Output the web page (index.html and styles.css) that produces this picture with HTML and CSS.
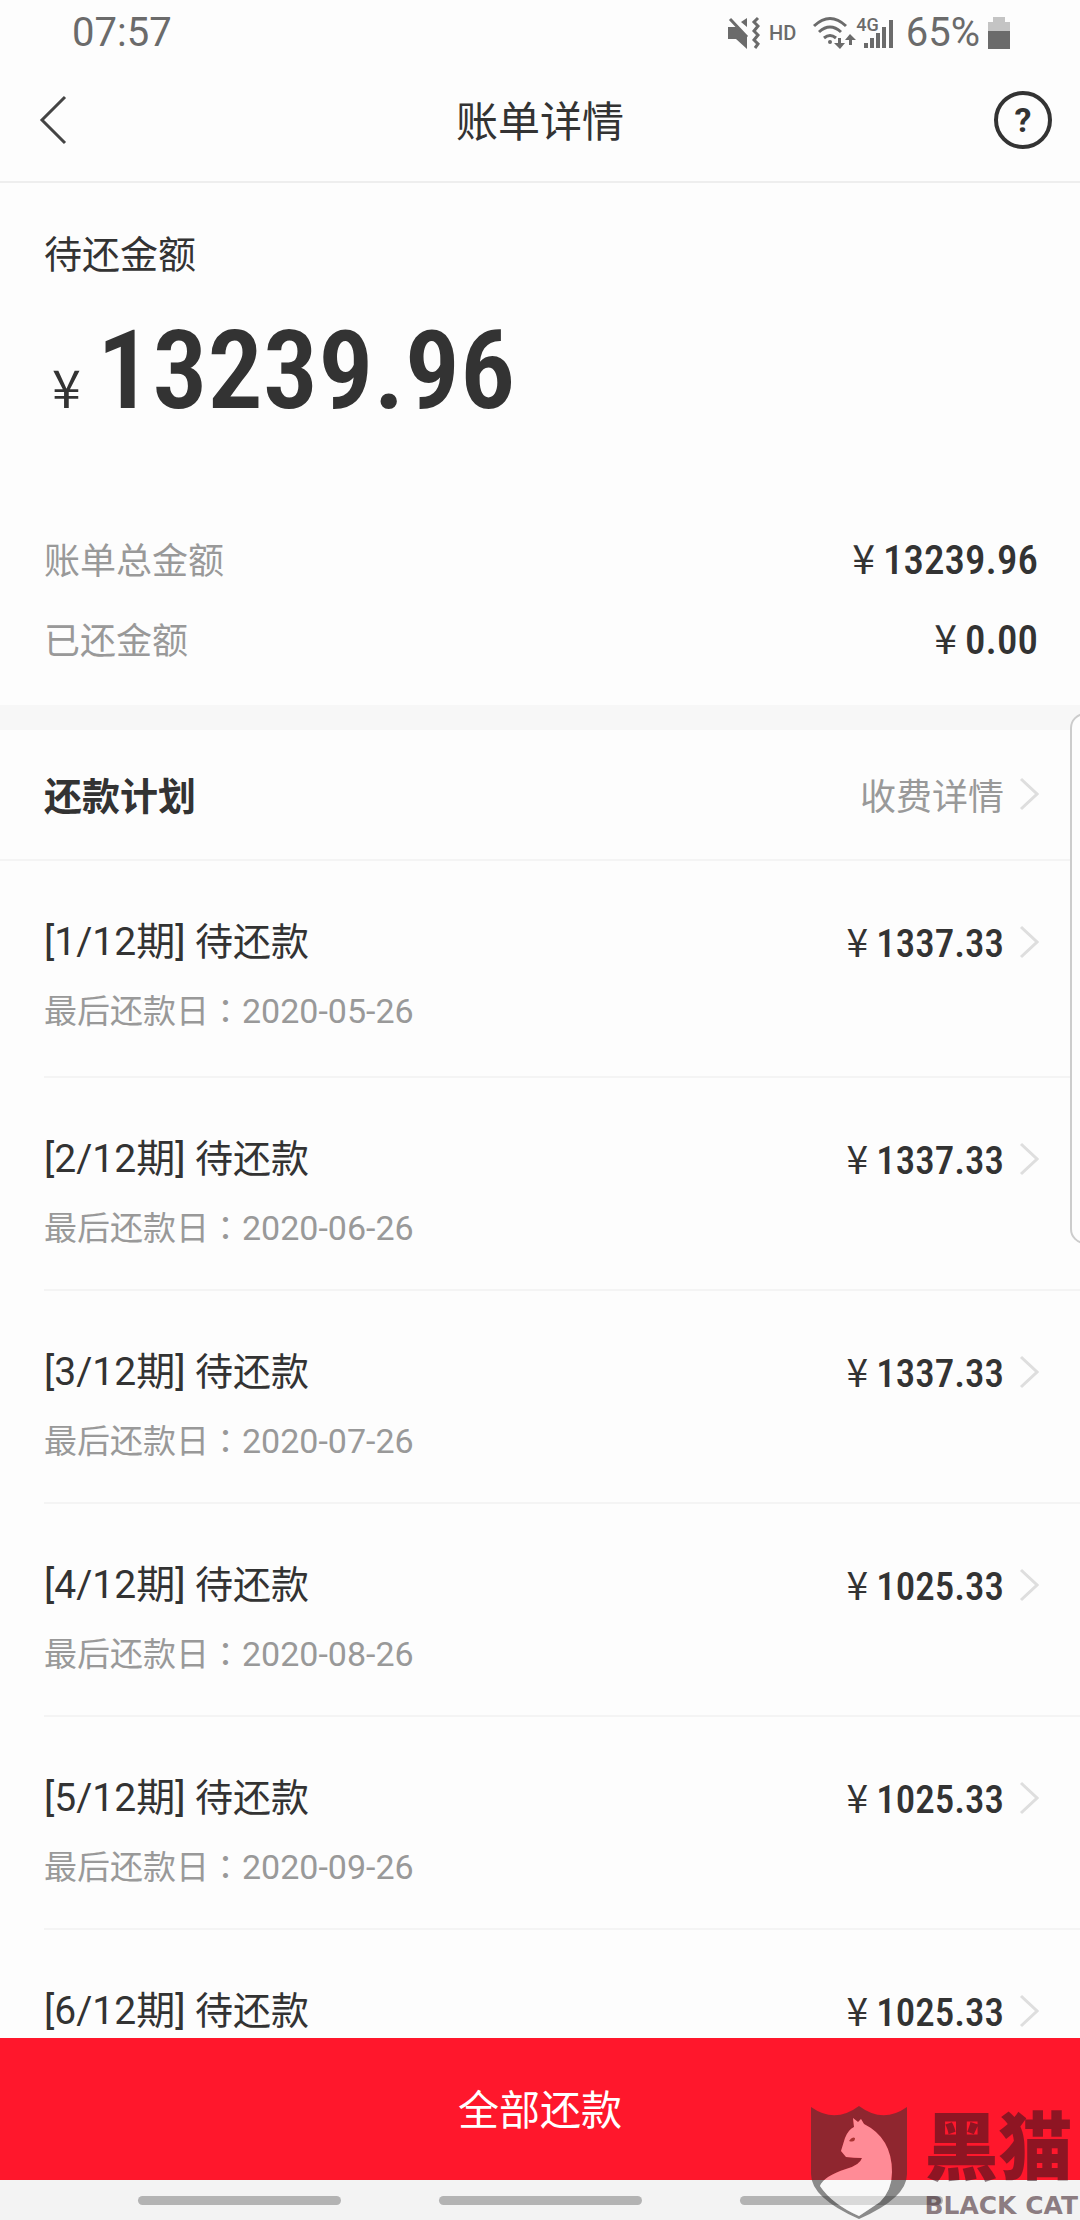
FILE: index.html
```html
<!DOCTYPE html>
<html lang="zh-CN">
<head>
<meta charset="utf-8">
<title>账单详情</title>
<link rel="stylesheet" href="styles.css">
</head>
<body>
<div class="app">
  <div class="status">
    <span class="clock">07:57</span>
    <div class="status-icons">
      <svg class="mute" width="34" height="34" viewBox="0 0 34 34"><path d="M1 11h8l11 9v13L9 23H1zM20 2v9l-6-5z"/><path class="line" d="M3 3l17 18"/><path class="line" d="M31 2l-4 4l4 4l-4 5l4 4l-4 5l4 4l-3 4"/></svg>
      <span class="hd">HD</span>
      <svg class="wifi" width="44" height="36" viewBox="0 0 44 36"><path class="line" d="M2 11q16-15 32 0M7 17q11-10 22 0M12 23q6-5 12 0"/><circle cx="18" cy="27" r="2"/><path d="M26 23h3v5h4l-5 6l-6-6h4zM37 30h3v-5h4l-6-6l-5 6h4z"/></svg>
      <span class="signal"><span class="gen">4G</span><svg width="30" height="30" viewBox="0 0 30 30"><path d="M1 25h4v5H1zM7 20h4v10H7zM13 15h4v15h-4zM19 9h4v21h-4zM26 2h4v28h-4z"/></svg></span>
      <span class="percent">65%</span>
      <svg class="battery" width="22" height="34" viewBox="0 0 22 34"><path class="pale" d="M5 1h12v5h5v9H0V6h5z"/><path d="M0 15h22v18H0z"/></svg>
    </div>
  </div>

  <header class="bar">
    <button class="icon-button" aria-label="返回"><svg width="28" height="50" viewBox="0 0 28 50"><path d="M26 2L3 25l23 23"/></svg></button>
    <h1>账单详情</h1>
    <button class="help" aria-label="帮助">?</button>
  </header>

  <main class="content">
    <section class="summary">
      <h2>待还金额</h2>
      <p class="total"><span class="yen">¥</span><span>13239.96</span></p>
      <dl class="facts">
        <div><dt>账单总金额</dt><dd class="money"><span class="yen">¥</span>13239.96</dd></div>
        <div><dt>已还金额</dt><dd class="money"><span class="yen">¥</span>0.00</dd></div>
      </dl>
    </section>

    <section class="plan">
      <div class="plan-head">
        <h2>还款计划</h2>
        <a href="#fees">收费详情<svg class="chevron" width="20" height="34" viewBox="0 0 20 34"><path d="M2 2l16 15L2 32"/></svg></a>
      </div>
      <ul class="items">
        <li><a href="#p1"><span class="name"><span class="term">[1/12期]</span> 待还款</span><span class="money"><span class="yen">¥</span>1337.33</span><svg class="chevron" width="20" height="34" viewBox="0 0 20 34"><path d="M2 2l16 15L2 32"/></svg><span class="due">最后还款日<span class="colon" lang="zh-TW">：</span><span class="date">2020-05-26</span></span></a></li>
        <li><a href="#p2"><span class="name"><span class="term">[2/12期]</span> 待还款</span><span class="money"><span class="yen">¥</span>1337.33</span><svg class="chevron" width="20" height="34" viewBox="0 0 20 34"><path d="M2 2l16 15L2 32"/></svg><span class="due">最后还款日<span class="colon" lang="zh-TW">：</span><span class="date">2020-06-26</span></span></a></li>
        <li><a href="#p3"><span class="name"><span class="term">[3/12期]</span> 待还款</span><span class="money"><span class="yen">¥</span>1337.33</span><svg class="chevron" width="20" height="34" viewBox="0 0 20 34"><path d="M2 2l16 15L2 32"/></svg><span class="due">最后还款日<span class="colon" lang="zh-TW">：</span><span class="date">2020-07-26</span></span></a></li>
        <li><a href="#p4"><span class="name"><span class="term">[4/12期]</span> 待还款</span><span class="money"><span class="yen">¥</span>1025.33</span><svg class="chevron" width="20" height="34" viewBox="0 0 20 34"><path d="M2 2l16 15L2 32"/></svg><span class="due">最后还款日<span class="colon" lang="zh-TW">：</span><span class="date">2020-08-26</span></span></a></li>
        <li><a href="#p5"><span class="name"><span class="term">[5/12期]</span> 待还款</span><span class="money"><span class="yen">¥</span>1025.33</span><svg class="chevron" width="20" height="34" viewBox="0 0 20 34"><path d="M2 2l16 15L2 32"/></svg><span class="due">最后还款日<span class="colon" lang="zh-TW">：</span><span class="date">2020-09-26</span></span></a></li>
        <li><a href="#p6"><span class="name"><span class="term">[6/12期]</span> 待还款</span><span class="money"><span class="yen">¥</span>1025.33</span><svg class="chevron" width="20" height="34" viewBox="0 0 20 34"><path d="M2 2l16 15L2 32"/></svg></a></li>
      </ul>
    </section>
  </main>

  <button class="pay">全部还款</button>
  <div class="nav"><span></span><span></span><span></span></div>

  <div class="edge-panel"></div>
  <div class="watermark">
    <svg width="98" height="114" viewBox="0 0 98 114"><path class="shield" fill-rule="evenodd" d="M1 1Q25 18 49 0Q73 18 97 1V68Q97 92 49 113Q1 92 1 68zM43 12l5 4l3-3l3 5Q82 32 82 66Q82 84 70 96L49 110Q22 98 10 80Q14 70 36 63Q50 59 52 52Q44 52 36 51L31 45L35 32Q38 24 44 21z"/><path class="cat" d="M43 12l5 4l3-3l3 5Q82 32 82 66Q82 84 70 96L49 110Q22 98 10 80Q14 70 36 63Q50 59 52 52Q44 52 36 51L31 45L35 32Q38 24 44 21z"/><path class="eye" d="M39 35q3-5 6-3q0 5-6 3z"/></svg>
    <div class="brand"><span class="brand-cn">黑猫</span><span class="brand-en">BLACK CAT</span></div>
  </div>
</div>
</body>
</html>
```
FILE: styles.css
```css
* { box-sizing: border-box; }
body, h1, h2, p, dl, dd, ul { margin: 0; padding: 0; }
body {
  background: #fdfdfd;
  color: #333;
  font-family: Roboto, "Noto Sans CJK SC", sans-serif;
}
button { border: 0; background: none; padding: 0; font: inherit; color: inherit; }
a { color: inherit; text-decoration: none; }
svg { display: block; flex: none; }

.app {
  position: relative;
  display: flex;
  flex-direction: column;
  height: 100vh;
  overflow: hidden;
}

.status {
  display: flex;
  flex: none;
  justify-content: space-between;
  align-items: center;
  height: 64px;
  padding: 2px 70px 0 72px;
  color: #6b6b6b;
}
.clock, .percent { font-size: 40px; line-height: 48px; }
.status-icons { display: flex; align-items: center; }
.status-icons svg { fill: #6b6b6b; }
.status-icons .line { fill: none; stroke: #6b6b6b; stroke-width: 3; }
.status-icons .pale { fill: #c4c4c4; }
.hd { margin: 0 16px 0 8px; font-size: 20px; font-weight: 500; }
.signal { display: flex; align-items: flex-end; margin-right: 13px; }
.gen { margin-right: -16px; align-self: flex-start; font-size: 18px; line-height: 14px; font-weight: 500; }
.battery { margin-left: 8px; }

.bar {
  display: flex;
  flex: none;
  align-items: center;
  height: 119px;
  padding: 0 28px 6px 39px;
  border-bottom: 2px solid #eee;
}
.icon-button { width: 47px; }
.icon-button svg { fill: none; stroke: #444; stroke-width: 3; }
.bar h1 { flex: 1; padding-top: 6px; text-align: center; font-size: 42px; line-height: 60px; font-weight: 400; }
.help {
  width: 58px;
  height: 58px;
  border: 4px solid #333;
  border-radius: 50%;
  font-size: 34px;
  line-height: 50px;
  font-weight: 700;
}

.content { flex: 1; min-height: 0; overflow: hidden; }
.summary { padding: 44px 42px 27px 44px; }
.summary h2 { font-size: 38px; line-height: 56px; font-weight: 400; }
.total {
  display: flex;
  align-items: baseline;
  gap: 16px;
  margin-top: 18px;
  padding-left: 8px;
  font-family: "Roboto Condensed", "Liberation Sans Narrow", Roboto, sans-serif;
  font-size: 110px;
  line-height: 140px;
  font-weight: 600;
}
.yen { font-family: "Noto Sans CJK SC", sans-serif; font-weight: 400; }
.total .yen { font-size: 52px; }
.facts { margin-top: 62px; }
.facts div { display: flex; justify-content: space-between; align-items: center; height: 80px; }
.facts dt { font-size: 36px; color: #999; }
.money {
  font-family: "Roboto Condensed", "Liberation Sans Narrow", Roboto, sans-serif;
  font-size: 41px;
  line-height: 56px;
  font-weight: 500;
}
.money .yen { margin-right: 8px; }

.plan { border-top: 25px solid #f7f7f7; }
.plan-head {
  display: flex;
  justify-content: space-between;
  align-items: center;
  height: 131px;
  padding: 0 41px 2px 44px;
  border-bottom: 2px solid #f4f4f4;
}
.plan-head h2 { font-size: 38px; font-weight: 700; }
.plan-head a { display: flex; align-items: center; gap: 15px; font-size: 36px; color: #999; }
.chevron { fill: none; stroke: #dedede; stroke-width: 3; }
.items { list-style: none; }
.items li { margin-left: 44px; border-bottom: 2px solid #f4f4f4; }
.items a {
  display: grid;
  grid-template-columns: 1fr auto auto;
  grid-template-rows: 56px 56px;
  align-items: center;
  gap: 12px 15px;
  height: 211px;
  padding: 53px 41px 0 0;
}
.items li:first-child a { height: 215px; }
.name { font-size: 38px; line-height: 56px; }
.term { font-size: 39px; }
.items .money { font-size: 39px; }
.due { grid-column: 1 / -1; font-size: 33px; line-height: 56px; color: #999; }
.colon { font-family: "Noto Sans CJK TC", sans-serif; }
.date { font-size: 34px; }

.pay {
  flex: none;
  height: 142px;
  padding-bottom: 5px;
  background: #ff172c;
  color: #fff;
  font-size: 41px;
}
.nav {
  display: flex;
  flex: none;
  justify-content: center;
  gap: 98px;
  height: 40px;
  padding-top: 16px;
  background: #f3f3f3;
}
.nav span { width: 203px; height: 9px; border-radius: 5px; background: #b3b3b3; }

.edge-panel {
  position: absolute;
  top: 713px;
  right: -20px;
  width: 30px;
  height: 531px;
  border: 2px solid #ccc;
  border-radius: 16px;
  background: #fdfdfd;
}
.watermark {
  position: absolute;
  right: 2px;
  bottom: 0;
  display: flex;
  align-items: flex-end;
  gap: 16px;
}
.watermark .shield { fill: #333; fill-opacity: .55; }
.watermark .cat { fill: #fff; fill-opacity: .5; }
.watermark .eye { fill: #a33; }
.brand { display: flex; flex-direction: column; color: rgba(50, 20, 30, .55); }
.brand-cn { font-size: 74px; line-height: 86px; font-weight: 900; }
.brand-en { font-family: "DejaVu Sans", sans-serif; font-size: 25px; line-height: 28px; font-weight: 700; }
```
